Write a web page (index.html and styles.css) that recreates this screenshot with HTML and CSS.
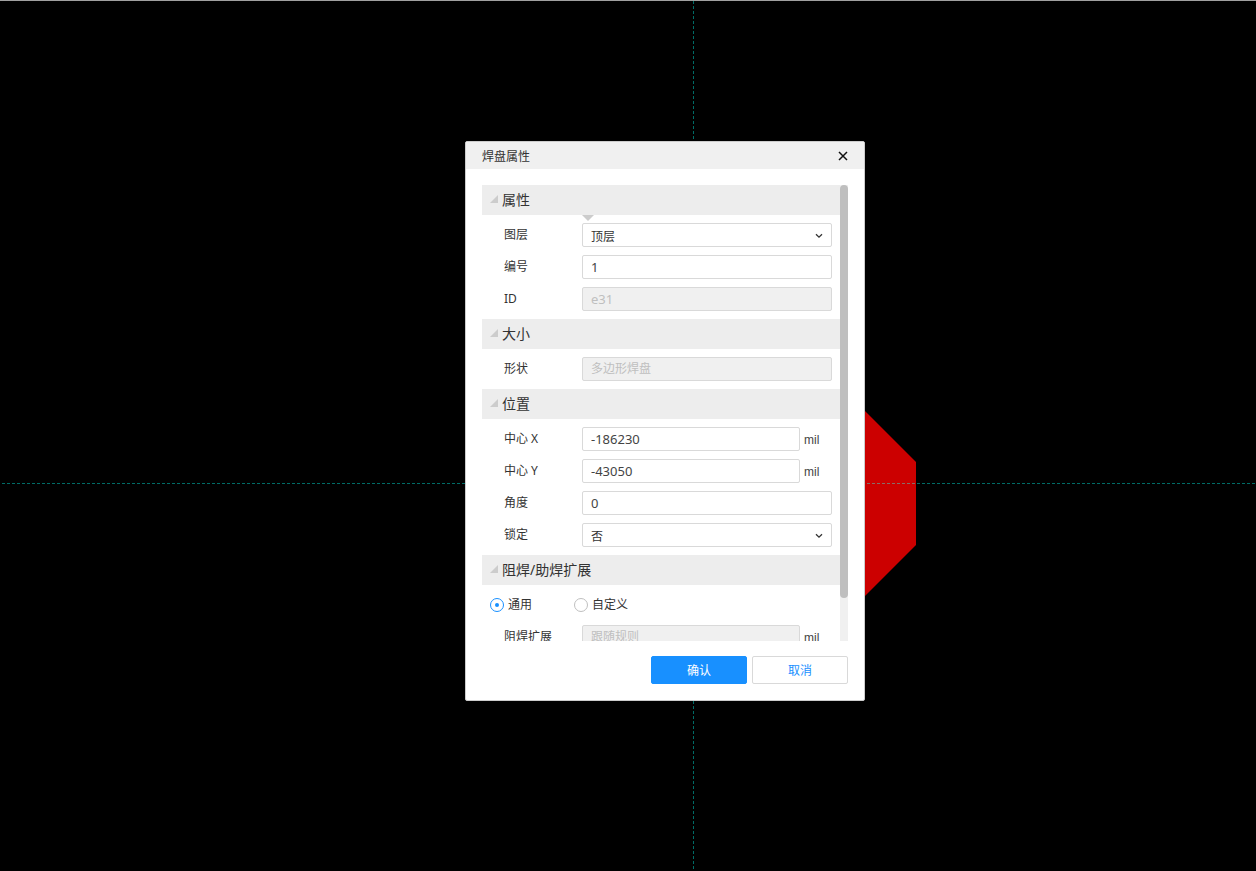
FILE: index.html
```html
<!DOCTYPE html>
<html lang="zh-CN">
<head>
<meta charset="utf-8">
<meta name="viewport" content="width=device-width, initial-scale=1">
<title>焊盘属性</title>
<link rel="stylesheet" href="styles.css">
</head>
<body>
<main class="canvas">
  <svg class="drawing" aria-hidden="true">
    <polygon class="pad" points="865,411 916,462 916,545 865,596 780,596 780,411"/>
    <line class="axis" x1="693.5" y1="1" x2="693.5" y2="100%"/>
    <line class="axis" x1="2" y1="483.5" x2="100%" y2="483.5"/>
    <line class="axis axis-on-pad" x1="867" y1="483.5" x2="916" y2="483.5"/>
  </svg>

  <form class="dialog" role="dialog" aria-labelledby="dialog-title">
    <header class="titlebar">
      <h1 class="title" id="dialog-title">焊盘属性</h1>
      <button class="close" type="button" aria-label="关闭">
        <svg width="10" height="10" viewBox="0 0 10 10"><path d="M1 1L9 9M9 1L1 9" fill="none" stroke="#111" stroke-width="1.5"/></svg>
      </button>
    </header>

    <div class="scroller">
      <div class="content">
        <section>
          <h2 class="heading"><span class="fold"></span>属性</h2>
          <div class="rows">
            <span class="pointer"></span>
            <div class="row">
              <label for="layer">图层</label>
              <div class="select-wrap">
                <select class="field" id="layer"><option>顶层</option></select>
                <svg class="chevron" width="8" height="6" viewBox="0 0 8 6"><path d="M1 1.2L4 4.2L7 1.2" fill="none" stroke="#333" stroke-width="1.3"/></svg>
              </div>
            </div>
            <div class="row">
              <label for="number">编号</label>
              <input class="field numeric" id="number" type="text" value="1">
            </div>
            <div class="row">
              <label for="pad-id">ID</label>
              <input class="field numeric" id="pad-id" type="text" value="e31" disabled>
            </div>
          </div>
        </section>

        <section>
          <h2 class="heading"><span class="fold"></span>大小</h2>
          <div class="rows">
            <div class="row">
              <label for="shape">形状</label>
              <input class="field" id="shape" type="text" value="多边形焊盘" disabled>
            </div>
          </div>
        </section>

        <section>
          <h2 class="heading"><span class="fold"></span>位置</h2>
          <div class="rows">
            <div class="row">
              <label for="cx">中心 X</label>
              <div class="measure"><input class="field numeric" id="cx" type="text" value="-186230"><span class="unit">mil</span></div>
            </div>
            <div class="row">
              <label for="cy">中心 Y</label>
              <div class="measure"><input class="field numeric" id="cy" type="text" value="-43050"><span class="unit">mil</span></div>
            </div>
            <div class="row">
              <label for="angle">角度</label>
              <input class="field numeric" id="angle" type="text" value="0">
            </div>
            <div class="row">
              <label for="locked">锁定</label>
              <div class="select-wrap">
                <select class="field" id="locked"><option>否</option></select>
                <svg class="chevron" width="8" height="6" viewBox="0 0 8 6"><path d="M1 1.2L4 4.2L7 1.2" fill="none" stroke="#333" stroke-width="1.3"/></svg>
              </div>
            </div>
          </div>
        </section>

        <section>
          <h2 class="heading"><span class="fold"></span>阻焊/助焊扩展</h2>
          <div class="rows">
            <div class="choices">
              <label class="choice"><input class="radio" type="radio" name="mask" checked>通用</label>
              <label class="choice"><input class="radio" type="radio" name="mask">自定义</label>
            </div>
            <div class="row">
              <label for="mask-expansion">阻焊扩展</label>
              <div class="measure"><input class="field" id="mask-expansion" type="text" value="跟随规则" disabled><span class="unit">mil</span></div>
            </div>
          </div>
        </section>
      </div>
      <div class="track"><div class="thumb"></div></div>
    </div>

    <footer class="actions">
      <button class="button primary" type="submit">确认</button>
      <button class="button" type="button">取消</button>
    </footer>
  </form>
</main>
</body>
</html>
```
FILE: styles.css
```css
* {
  box-sizing: border-box;
}

body {
  margin: 0;
  background: #000;
  color: #333;
  font: 12px/16px "Noto Sans", "Noto Sans CJK SC", sans-serif;
}

.canvas {
  position: relative;
  min-height: 100vh;
  border-top: 1px solid #a0a0a0;
  overflow: hidden;
}

.drawing {
  position: absolute;
  top: -1px;
  left: 0;
  width: 100%;
  height: calc(100% + 1px);
}

.pad {
  fill: #c00;
}

.axis {
  stroke: #006b66;
  stroke-width: 1px;
  stroke-dasharray: 3 2;
}

.axis-on-pad {
  stroke: #8a6b66;
}

.dialog {
  position: absolute;
  top: 140px;
  left: 465px;
  width: 400px;
  display: flex;
  flex-direction: column;
  border: 1px solid #ccc;
  border-radius: 2px;
  background: #fff;
}

.titlebar {
  display: flex;
  align-items: center;
  justify-content: space-between;
  height: 27px;
  padding: 0 16px;
  background: #f0f0f0;
}

.title,
.heading {
  margin: 0;
  font-weight: 400;
}

.title {
  padding-top: 2px;
  font-size: 12px;
}

.close {
  display: flex;
  padding: 0;
  border: 0;
  background: none;
}

.scroller {
  display: flex;
  height: 456px;
  margin: 16px 16px 0;
  overflow: hidden;
}

.content {
  flex: 1;
}

.track {
  width: 8px;
  background: #f0f0f0;
}

.thumb {
  height: 413px;
  border-radius: 4px;
  background: #bfbfbf;
}

.heading {
  display: flex;
  align-items: center;
  gap: 4px;
  height: 30px;
  padding: 0 8px;
  background: #ededed;
  font-size: 14px;
}

.fold {
  width: 8px;
  height: 8px;
  margin-bottom: 2px;
  background: #ccc;
  clip-path: polygon(100% 0, 100% 100%, 0 100%);
}

.rows {
  position: relative;
  display: flex;
  flex-direction: column;
  gap: 8px;
  padding: 8px 8px 8px 22px;
}

.pointer {
  position: absolute;
  top: 0;
  left: 100px;
  width: 12px;
  height: 6px;
  background: #ccc;
  clip-path: polygon(0 0, 100% 0, 50% 100%);
}

.row {
  display: grid;
  grid-template-columns: 78px 1fr;
  height: 24px;
  line-height: 24px;
}

.field {
  width: 100%;
  height: 24px;
  min-width: 0;
  margin: 0;
  padding: 0 8px;
  border: 1px solid #d9d9d9;
  border-radius: 2px;
  background: #fff;
  color: #333;
  font: inherit;
  appearance: none;
}

select.field {
  padding-top: 1px;
}

.numeric {
  color: #444;
  font-size: 13px;
}

.field:disabled {
  background: #f0f0f0;
  color: #bfbfbf;
}

.select-wrap {
  position: relative;
}

.chevron {
  position: absolute;
  top: 10px;
  right: 9px;
  pointer-events: none;
}

.measure {
  display: grid;
  grid-template-columns: 1fr 28px;
  gap: 4px;
}

.unit {
  color: #444;
  font-family: "Liberation Sans", sans-serif;
  line-height: 26px;
}

.choices {
  display: flex;
  gap: 42px;
  height: 24px;
  margin-left: -14px;
}

.choice {
  display: flex;
  align-items: center;
  gap: 4px;
}

.radio {
  display: grid;
  place-items: center;
  width: 14px;
  height: 14px;
  margin: 0;
  border: 1px solid #bfbfbf;
  border-radius: 50%;
  background: #fff;
  appearance: none;
}

.radio:checked {
  border-color: #1890ff;
}

.radio:checked::before {
  content: "";
  width: 4px;
  height: 4px;
  border-radius: 50%;
  background: #1890ff;
}

.actions {
  display: flex;
  justify-content: flex-end;
  gap: 5px;
  padding: 15px 16px 16px;
}

.button {
  width: 96px;
  height: 28px;
  padding: 2px 0 0;
  border: 1px solid #d9d9d9;
  border-radius: 2px;
  background: #fff;
  color: #1890ff;
  font: inherit;
}

.primary {
  border-color: #1890ff;
  background: #1890ff;
  color: #fff;
}
```
